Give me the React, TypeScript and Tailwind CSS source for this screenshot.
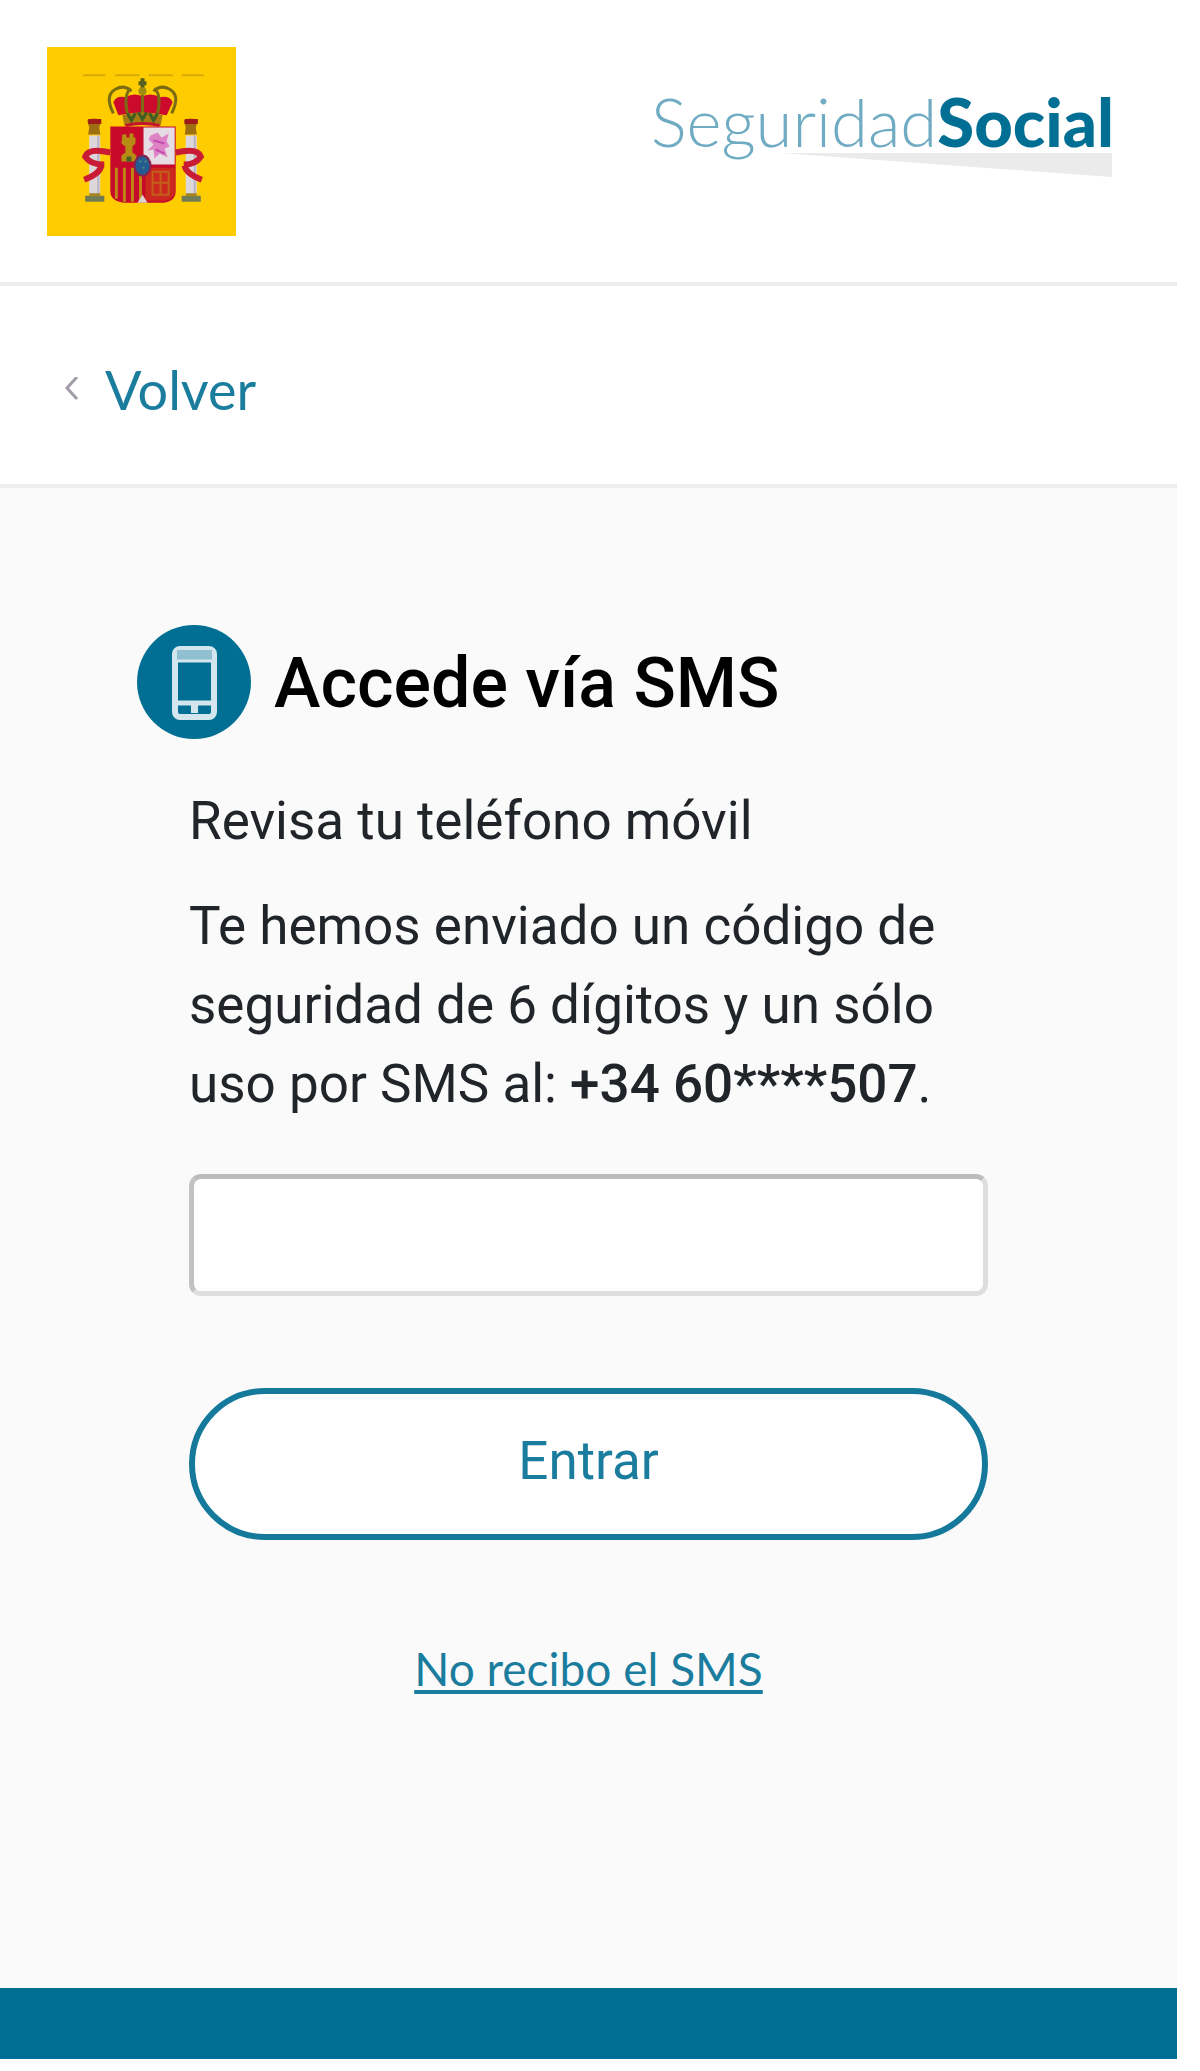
import { useState } from "react";

function SpanishFlag() {
  return (
    <svg viewBox="0 0 188 188" className="size-[189px]" role="img" aria-label="Gobierno de España">
      <rect width="188" height="188" fill="#ffcc00" />
      <path d="M36 28h22M68 28h24M101 28h24M134 28h22" stroke="#d9ab08" strokeWidth="2" />

      {/* crown */}
      <path d="M66 55q3-7 12-5q8-5 17-1q9-4 17 1q10-2 13 5l-6 13q-24-5-48 0z" fill="#cc0a2b" />
      <g fill="none" stroke="#7b6c12" strokeWidth="3">
        <path d="M66 66q-9-18 2-24q9-5 16 2M124 66q9-18-2-24q-9-5-16 2" />
        <path d="M80 66q-4-18 3-25M110 66q4-18-3-25M95 34v32" />
      </g>
      <path d="M95 31v15M91 36h8" stroke="#56601f" strokeWidth="4" />
      <circle cx="95" cy="44" r="4" fill="#a08a10" />
      <path d="M75 68q20-6 40 0l-2 10q-18-4-36 0z" fill="#a57a12" />
      <path d="M80 66l4 7l4-7M91 65l4 7l4-7M102 66l4 7l4-7" stroke="#3f5c22" strokeWidth="3" fill="none" />
      <path d="M78 78q17-4 34 0" stroke="#c3152b" strokeWidth="3" fill="none" />

      {/* shield */}
      <path d="M63 79h65v64q0 12-15 12H80q-17 0-17-12z" fill="#c80a2a" />
      <path d="M96 80h31v37H96z" fill="#e6dce3" />
      <path d="M103 88l7-3 4 5 7-4-2 8 3 5-5 2 3 9-8-4-5 5-1-9-6 1 6-6-5-5z" fill="#df83c6" />
      <path d="M106 93l11 3M108 102l9 4" stroke="#c24cad" strokeWidth="2" />
      <path d="M75 87h4v3h3v-4h4v4h2v6l-3 3v6l4 3v6H74v-6l4-3v-6l-4-3z" fill="#b68d12" />
      <path d="M79 109h5v5h-5z" fill="#496226" />
      <path d="M69 120v31M77 120v34M85 120v34M93 122v32" stroke="#bf8415" strokeWidth="3" />
      <path d="M98 120h29v23q0 10-14 10H98z" fill="#cc2820" />
      <path d="M105 124h16v23h-16zM113 124v23M105 135h16" stroke="#c2601a" strokeWidth="2" fill="none" />
      <path d="M90 155l5-8 5 8z" fill="#ddd2d0" />
      <ellipse cx="95" cy="118" rx="8" ry="10" fill="#245b91" stroke="#83244e" strokeWidth="2" />
      <path d="M92 114h2M97 114h2M95 120h2" stroke="#4c8a72" strokeWidth="2" />

      {/* pillars of Hercules */}
      <path d="M42 88h11v59H42zM138 88h11v59h-11z" fill="#dcd7da" />
      <path d="M51 88v59M147 88v59" stroke="#b9b3bf" strokeWidth="2" />
      <path d="M40 73q7-4 14 0l-2 7 1 7H41l1-7zM136 73q7-4 14 0l-2 7 1 7h-12l1-7z" fill="#9d6f11" />
      <path d="M41 74h13M137 74h13" stroke="#a21b1b" strokeWidth="5" />
      <path d="M38 148h19v6H38zM134 148h19v6h-19z" fill="#707c55" />
      <path d="M42 147h11M138 147h11" stroke="#a78420" strokeWidth="3" />
      <g fill="none" stroke="#ca1b35" strokeWidth="6">
        <path d="M63 105q-22-5-25 4q5 8 19 8M54 118q-1 8-17 14" />
        <path d="M128 105q22-5 25 4q-5 8-17 8M137 118q1 8 17 14" />
      </g>
    </svg>
  );
}

function Logo() {
  return (
    <div className="mt-[38px] mr-4 font-['Lato',sans-serif] text-[67px] leading-[72px] text-[#006f93]">
      <div>
        <span className="font-light text-[#6fabc2]">Seguridad</span>
        <span className="font-black">Social</span>
      </div>
      <svg viewBox="0 0 462 28" className="-mt-1 w-full" aria-hidden="true">
        <path d="M130 0L460 0V24Z" fill="#ebebeb" />
      </svg>
    </div>
  );
}

function PhoneBadge() {
  return (
    <svg viewBox="0 0 115 115" className="size-[115px] shrink-0" aria-hidden="true">
      <circle cx="57" cy="57" r="57" fill="#006f93" />
      <rect x="38" y="24" width="39" height="68" rx="5" fill="#006f93" stroke="#d3e6ed" strokeWidth="6" />
      <path d="M40 25h35v10H40z" fill="#8fbfd0" />
      <path d="M38 36h39" stroke="#d3e6ed" strokeWidth="3" />
      <path d="M38 78h39" stroke="#d3e6ed" strokeWidth="5" />
      <path d="M54 84h7" stroke="#d3e6ed" strokeWidth="8" />
    </svg>
  );
}

export default function App() {
  const [code, setCode] = useState("");

  return (
    <div className="min-h-screen bg-white pr-[23px] pb-3 font-['Roboto',sans-serif] text-[#212529]">
      <header className="flex items-start justify-between border-b-4 border-[#ededed] px-[47px] pt-[47px] pb-[46px]">
        <SpanishFlag />
        <Logo />
      </header>

      <nav className="border-b-4 border-[#ededed] px-16 pt-[69px] pb-[60px]">
        <a href="#" className="inline-flex items-center gap-[26px] font-['Lato',sans-serif] text-[54px] leading-[69px] text-[#1b7d9e]">
          <svg viewBox="0 0 15 26" className="h-[26px] w-[15px]" aria-hidden="true">
            <path d="M13 0L3 11L13 22" fill="none" stroke="#a29ba8" strokeWidth="3" />
          </svg>
          Volver
        </a>
      </nav>

      <main className="bg-[#fafafa] px-[137px] pt-[137px] pb-[281px]">
        <div className="flex items-center gap-[22px]">
          <PhoneBadge />
          <h1 className="text-[70px] leading-[80px] font-medium text-black">Accede vía SMS</h1>
        </div>

        <form className="px-[52px] pt-[42px]" onSubmit={(e) => e.preventDefault()}>
          <p className="text-[53px] leading-[79px]">Revisa tu teléfono móvil</p>
          <p className="mt-[26px] text-[53px] leading-[79px]">
            <label htmlFor="code">
              Te hemos enviado un código de seguridad de 6 dígitos y un sólo uso por SMS al:{" "}
              <b className="font-medium">+34 60****507</b>.
            </label>
          </p>
          <input
            id="code"
            type="text"
            inputMode="numeric"
            maxLength={6}
            value={code}
            onChange={(e) => setCode(e.target.value)}
            className="mt-[50px] block h-[122px] w-full rounded-xl border-[5px] border-t-[#bcbcbc] border-r-[#dedede] border-b-[#dedede] border-l-[#c2c2c2] bg-white px-6 text-[53px] outline-none"
          />
          <button
            type="submit"
            className="mt-[92px] block h-[152px] w-full rounded-full border-[6px] border-[#14799a] bg-white pb-1 text-[53px] text-[#1b7d9e]"
          >
            Entrar
          </button>
          <div className="mt-[91px] text-center">
            <a
              href="#"
              className="font-['Lato',sans-serif] text-[46px] leading-[76px] text-[#1b7d9e] underline decoration-4 underline-offset-4"
            >
              No recibo el SMS
            </a>
          </div>
        </form>
      </main>

      <footer className="h-[71px] bg-[#006f93]" />
    </div>
  );
}
